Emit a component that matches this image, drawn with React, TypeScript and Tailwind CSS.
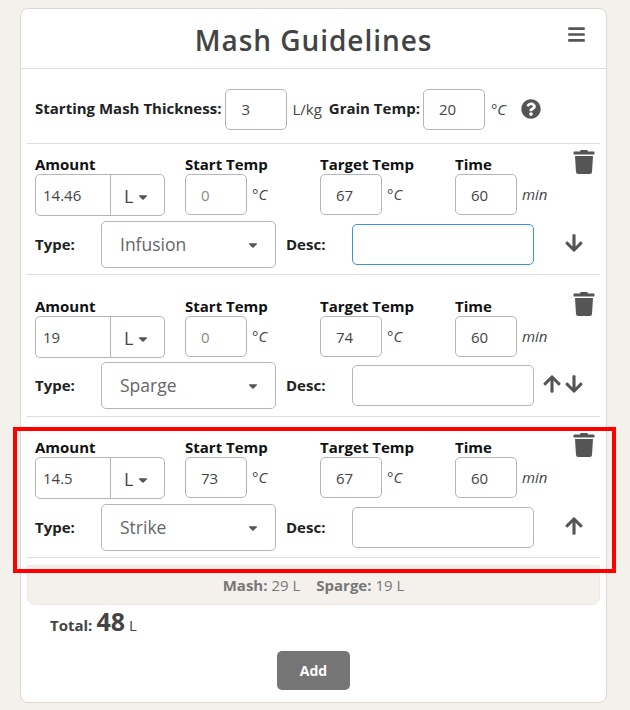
import React from "react";
import { FaArrowDown, FaArrowUp, FaBars, FaCaretDown, FaQuestionCircle, FaTrash } from "react-icons/fa";

const FONT = "font-['Open_Sans',sans-serif]";

function NumBox({ value, muted, className = "" }: { value: string; muted?: boolean; className?: string }) {
  return (
    <input
      readOnly
      value={value}
      className={`h-[41px] w-[62px] rounded-[5px] border border-[#b5b5b5] bg-white pl-[15px] text-[15px] outline-none ${muted ? "text-[#8a8a8a]" : "text-[#444]"} ${className}`}
    />
  );
}

function TempCol({ label, value, unit, muted }: { label: string; value: string; unit: string; muted?: boolean }) {
  return (
    <div className="flex w-[135px] flex-col">
      <div className="h-[20px] text-[15px] leading-[20px] font-bold text-[#111]">{label}</div>
      <div className="flex items-center">
        <NumBox value={value} muted={muted} />
        <span className="ml-[5px] text-[15px] text-[#444] italic">{unit}</span>
      </div>
    </div>
  );
}

type RowProps = {
  amount: string;
  start: string;
  startMuted?: boolean;
  target: string;
  type: string;
  up?: boolean;
  down?: boolean;
  focused?: boolean;
  topPad: string;
  midGap: string;
  bottomPad: string;
  trashTop: string;
};

function StepRow({ amount, start, startMuted, target, type, up, down, focused, topPad, midGap, bottomPad, trashTop }: RowProps) {
  return (
    <div className={`relative mx-[6px] border-b border-[#ddd] pl-[8px] ${topPad} ${bottomPad}`}>
      <FaTrash className={`absolute right-[4px] text-[24px] text-[#555] ${trashTop}`} />
      <div className="flex">
        <div className="flex w-[150px] flex-col">
          <div className="h-[20px] text-[15px] leading-[20px] font-bold text-[#111]">Amount</div>
          <div className="flex h-[42px] w-[130px] rounded-[5px] border border-[#b5b5b5]">
            <input readOnly value={amount} className="w-[74px] rounded-l-[5px] bg-white pl-[7px] text-[15px] text-[#444] outline-none" />
            <div className="flex flex-1 items-center gap-[3px] border-l border-[#b5b5b5] pt-[3px] pl-[13px] text-[18px] text-[#444]">
              L <FaCaretDown className="text-[14px] text-[#555]" />
            </div>
          </div>
        </div>
        <TempCol label="Start Temp" value={start} unit="°C" muted={startMuted} />
        <TempCol label="Target Temp" value={target} unit="°C" />
        <TempCol label="Time" value="60" unit="min" />
      </div>
      <div className={`flex items-center ${midGap}`}>
        <div className="w-[66px] text-[15px] font-bold text-[#222]">Type:</div>
        <div className="flex h-[47px] w-[175px] items-center justify-between rounded-[5px] border border-[#b5b5b5] pr-[15px] pl-[18px] text-[17.5px] text-[#666]">
          {type}
          <FaCaretDown className="text-[14px] text-[#555]" />
        </div>
        <div className="ml-[10px] w-[66px] text-[15px] font-bold text-[#222]">Desc:</div>
        <input
          readOnly
          value=""
          className={`h-[41px] w-[182px] rounded-[5px] border bg-white outline-none ${focused ? "border-[#3498db]" : "border-[#b5b5b5]"}`}
        />
        <div className="mb-[4px] flex w-[50px] justify-end gap-[2px] text-[#555]">
          {up && <FaArrowUp className="text-[20px]" />}
          {down && <FaArrowDown className="text-[20px]" />}
        </div>
      </div>
    </div>
  );
}

export default function App() {
  return (
    <div className={`h-[710px] overflow-hidden bg-[#f4f1ed] px-[20px] pt-[8px] ${FONT}`}>
      <div className="relative h-[695px] w-[587px] rounded-[8px] border border-[#ddd8d2] bg-white">
        <div className="relative flex h-[60px] items-center justify-center border-b border-[#ddd] pt-[3px] text-[28px] font-semibold tracking-[0.95px] text-[#444]">
          Mash Guidelines
          <FaBars className="absolute top-[16px] right-[20px] text-[19px] text-[#555]" />
        </div>

        <div className="mx-[6px] flex h-[75px] items-center border-b border-[#ddd] pt-[6px] pl-[8px]">
          <span className="mb-[2px] text-[15px] font-bold text-[#222]">Starting Mash Thickness:</span>
          <NumBox value="3" className="ml-[4px]" />
          <span className="ml-[5px] text-[15px] text-[#444]">L/kg</span>
          <span className="mb-[2px] ml-[7px] text-[15px] font-bold text-[#222]">Grain Temp:</span>
          <NumBox value="20" className="ml-[3px]" />
          <span className="ml-[6px] text-[15px] text-[#444] italic">°C</span>
          <FaQuestionCircle className="ml-[15px] text-[20px] text-[#555]" />
        </div>

        <StepRow topPad="pt-[10px]" midGap="mt-[5px]" bottomPad="pb-[6px]" trashTop="top-[6px]" amount="14.46" start="0" startMuted target="67" type="Infusion" down focused />
        <StepRow topPad="pt-[21px]" midGap="mt-[4px]" bottomPad="pb-[7px]" trashTop="top-[17px]" amount="19" start="0" startMuted target="74" type="Sparge" up down />
        <StepRow topPad="pt-[20px]" midGap="mt-[5px]" bottomPad="pb-[6px]" trashTop="top-[16px]" amount="14.5" start="73" target="67" type="Strike" up />

        <div className="mx-[6px] mt-[7px] flex h-[40px] items-center justify-center gap-[16px] rounded-b-[8px] border border-[#eceae6] bg-[#f4f1ed] pt-[1px] text-[15px] text-[#777]">
          <span><b>Mash:</b> 29 L</span>
          <span><b>Sparge:</b> 19 L</span>
        </div>

        <div className="mt-[-2px] ml-[29px] flex h-[38px] items-baseline text-[#444]">
          <span className="text-[15px] font-bold">Total:</span>
          <span className="ml-[4px] text-[25px] font-bold">48</span>
          <span className="ml-[4px] text-[15px]">L</span>
        </div>

        <div className="mt-[10px] flex justify-center">
          <button className="h-[39px] w-[73px] rounded-[5px] bg-[#757575] text-[14px] font-bold text-white">Add</button>
        </div>

        <div className="pointer-events-none absolute top-[418px] left-[-8px] h-[146px] w-[603px] border-[4px] border-[#ff0000]" />
      </div>
    </div>
  );
}
